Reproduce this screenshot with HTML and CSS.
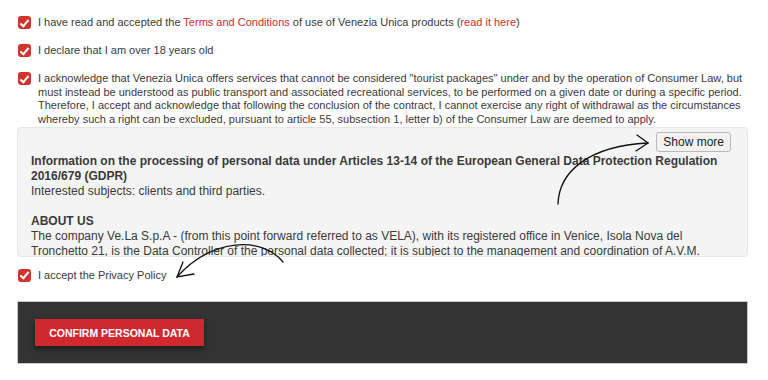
FILE: index.html
```html
<!DOCTYPE html>
<html lang="en">
<head>
  <meta charset="UTF-8" />
  <meta name="viewport" content="width=device-width, initial-scale=1" />
  <title>Venezia Unica - Personal data</title>
  <link rel="stylesheet" href="styles.css">
</head>
<body>

  <div class="page">

    <label class="check-row">
      <span class="check"></span>
      <span>I have read and accepted the <a href="#">Terms and Conditions</a> of use of Venezia Unica products (<a href="#">read it here</a>)</span>
    </label>

    <label class="check-row">
      <span class="check"></span>
      <span>I declare that I am over 18 years old</span>
    </label>

    <label class="check-row">
      <span class="check"></span>
      <span>I acknowledge that Venezia Unica offers services that cannot be considered "tourist packages" under and by the operation of Consumer Law, but must instead be understood as public transport and associated recreational services, to be performed on a given date or during a specific period. Therefore, I accept and acknowledge that following the conclusion of the contract, I cannot exercise any right of withdrawal as the circumstances whereby such a right can be excluded, pursuant to article 55, subsection 1, letter b) of the Consumer Law are deemed to apply.</span>
    </label>

    <div class="privacy-box">
      <button class="btn-more">Show more</button>
      <p class="privacy-title">Information on the processing of personal data under Articles 13-14 of the European General Data Protection Regulation 2016/679 (GDPR)</p>
      <p>Interested subjects: clients and third parties.</p>
      <p class="privacy-title">ABOUT US</p>
      <p>The company Ve.La S.p.A - (from this point forward referred to as VELA), with its registered office in Venice, Isola Nova del Tronchetto 21, is the Data Controller of the personal data collected; it is subject to the management and coordination of A.V.M. S.p.A., which in turn is controlled by the Municipality of Venice.</p>
    </div>

    <label class="check-row privacy-row">
      <span class="check"></span>
      <span>I accept the Privacy Policy</span>
    </label>

    <div class="confirm-bar">
      <button class="btn-confirm">CONFIRM PERSONAL DATA</button>
    </div>

  </div>

  <!-- hand drawn annotation arrows -->
  <svg class="arrows" width="768" height="380" viewBox="0 0 768 380">
    <path d="M558 204 C559 172 588 146 648 143" />
    <path d="M637 135 L648 143 L636 151" />
    <path d="M283 262 C262 236 212 238 177 277" />
    <path d="M183 262 L177 277 L194 274" />
  </svg>

</body>
</html>
```

FILE: styles.css
```css
body {
  margin: 0;
  font-family: "Liberation Sans", Arial, sans-serif;
  color: #3a3a3a;
  background: #fff;
}

.page {
  position: relative;
  width: 731px;
  padding: 16px 0 0 17px;
}

.check-row {
  display: flex;
  align-items: flex-start;
  gap: 7px;
  font-size: 11px;
  line-height: 13.5px;
  margin-bottom: 14.5px;
}

.check-row a {
  color: #d32a2f;
  text-decoration: none;
}

.check {
  flex: none;
  width: 13px;
  height: 13px;
  margin-left: 1px;
  margin-top: 0;
  border-radius: 3px;
  background: #d0342c;
  position: relative;
}

.check::after {
  content: "";
  position: absolute;
  left: 4px;
  top: 1.5px;
  width: 3px;
  height: 7px;
  border: solid #fff;
  border-width: 0 2px 2px 0;
  transform: rotate(40deg);
}

.privacy-box {
  margin-top: -14px;
  height: 130px;
  overflow: hidden;
  background: #f4f4f4;
  border: 1px solid #e6e6e6;
  border-radius: 4px;
  padding: 4px 16px 0 13px;
  box-sizing: border-box;
  font-size: 12px;
  line-height: 15px;
}

.privacy-box p {
  margin: 0 0 15px 0;
}

.privacy-box p.privacy-title {
  font-weight: bold;
  margin: 0;
}

.btn-more {
  float: right;
  font-family: "Liberation Sans", Arial, sans-serif;
  font-size: 12px;
  color: #222;
  background: #f2f2f2;
  border: 1px solid #b9b9b9;
  border-radius: 3px;
  padding: 2px 6px;
  margin-bottom: 2px;
}

.privacy-box .btn-more + p {
  clear: both;
}

.privacy-row {
  margin-top: 12px;
  margin-bottom: 19px;
}

.confirm-bar {
  background: #333;
  border: 1px solid #c8c8c8;
  height: 63px;
  box-sizing: border-box;
  padding: 17px 0 0 17px;
}

.btn-confirm {
  font-family: "Liberation Sans", Arial, sans-serif;
  font-weight: bold;
  font-size: 10.5px;
  color: #fff;
  background: #d0282f;
  border: none;
  width: 169px;
  height: 27px;
  box-shadow: 0 3px 5px rgba(0, 0, 0, 0.5);
}

.arrows {
  position: absolute;
  left: 0;
  top: 0;
  pointer-events: none;
}

.arrows path {
  fill: none;
  stroke: #111;
  stroke-width: 1.3;
  stroke-linecap: round;
}
```
